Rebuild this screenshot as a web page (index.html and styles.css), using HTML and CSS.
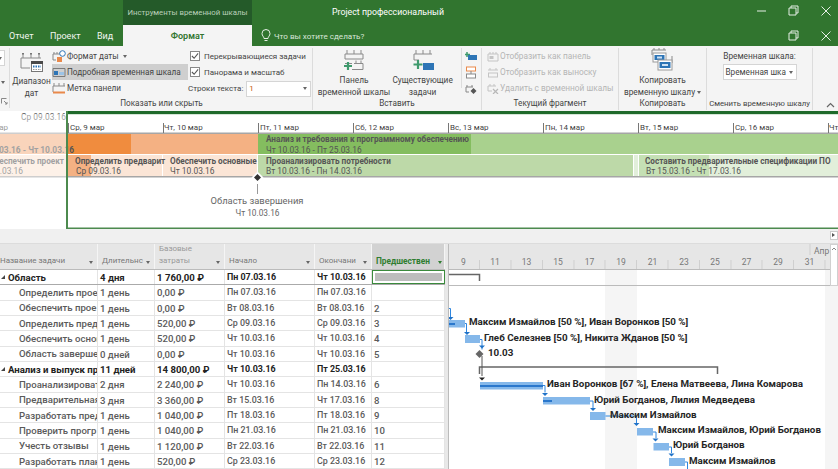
FILE: index.html
```html
<!DOCTYPE html>
<html lang="ru">
<head>
<meta charset="utf-8">
<title>Project профессиональный</title>
<link rel="stylesheet" href="styles.css">
</head>
<body>
<div class="app">
  <header class="titlebar">
    <div class="title-pad"></div>
    <div class="context-title">Инструменты временной шкалы</div>
    <div class="doc-title">Project профессиональный</div>
    <div class="winctl">
      <svg width="12" height="12" viewBox="0 0 12 12"><path class="wl" d="M1 6h9"/></svg>
      <svg width="12" height="12" viewBox="0 0 12 12"><path class="wl" d="M3 3V1h7v7H8M1 3h7v7H1z"/></svg>
      <svg width="12" height="12" viewBox="0 0 12 12"><path class="wl" d="M1.500 1.500l9 9M10.500 1.500l-9 9"/></svg>
    </div>
  </header>
  <nav class="tabs">
    <div class="tabs-left">
      <span class="tab t1">Отчет</span>
      <span class="tab t2">Проект</span>
      <span class="tab t3">Вид</span>
    </div>
    <span class="tab-active">Формат</span>
    <svg class="bulb" width="10" height="13" viewBox="0 0 10 13"><path class="wl" d="M3 9.500C3 7.500 1 7 1 4.500a4 4 0 0 1 8 0C9 7 7 7.500 7 9.500zM3.500 11.500h3"/></svg>
    <span class="tell">Что вы хотите сделать?</span>
    <div class="winctl2">
      <svg width="12" height="12" viewBox="0 0 12 12"><path class="wl" d="M3 3V1h7v7H8M1 3h7v7H1z"/></svg>
      <svg width="12" height="12" viewBox="0 0 12 12"><path class="wl" d="M1.500 1.500l9 9M10.500 1.500l-9 9"/></svg>
    </div>
  </nav>

  <section class="ribbon">
    <div class="stub">
      <div class="stub-combo"><i class="caret"></i></div>
      <i class="caret stub-caret"></i>
      <svg class="launcher" width="7" height="7" viewBox="0 0 7 7"><path d="M.500.500h5M.500.500v5M3 3l3 3M6 4v2H4" fill="none" stroke="#888"/></svg>
    </div>

    <div class="group g-show">
      <div class="gbody show-body">
        <div class="bigbtn range">
          <svg width="24" height="22" viewBox="0 0 24 22"><path d="M1 7h20M3 3v4M11 3v4M19 3v4M1 7v10h9" fill="none" stroke="#8a8a8a"/><rect x="2" y="2" width="2" height="1.500" fill="#777"/><rect x="10" y="2" width="2" height="1.500" fill="#777"/><rect x="18" y="2" width="2" height="1.500" fill="#777"/><rect x="11.500" y="10.500" width="11" height="10" fill="#fff" stroke="#777"/><rect x="11" y="10" width="12" height="3" fill="#4a4a4a"/><path d="M13 15.500h8" stroke="#2e75b6" stroke-width="2" stroke-dasharray="1.500 1"/><path d="M13 18.500h8" stroke="#9a9a9a" stroke-dasharray="1.500 1"/></svg>
          <span>Диапазон<br>дат</span>
        </div>
        <div class="col-cmds">
          <div class="cmd"><svg width="14" height="13" viewBox="0 0 14 13"><path d="M1 4h8M2 2v2M5 2v2M8 2v2M1 4v6h3" fill="none" stroke="#888"/><rect x="5" y="7" width="5" height="5" fill="#e9894a"/><circle cx="10.500" cy="3.500" r="2.800" fill="#fff" stroke="#2e75b6"/></svg><span>Формат даты</span><i class="caret"></i></div>
          <div class="cmd cmd-on"><svg width="14" height="12" viewBox="0 0 14 12"><path d="M1 2.500h12M1 2.500v8h12v-8" fill="none" stroke="#7a7a7a"/><rect x="2" y="5" width="4" height="4" fill="#2e75b6"/><rect x="7" y="6" width="5" height="3" fill="#9cc3e6"/></svg><span>Подробная временная шкала</span></div>
          <div class="cmd"><svg width="14" height="12" viewBox="0 0 14 12"><path d="M2 1v3M7 1v3M12 1v3M1 4h12M1 4v6" fill="none" stroke="#8a8a8a"/><path d="M1 10.500h12" stroke="#e9894a" stroke-width="2"/></svg><span>Метка панели</span></div>
        </div>
        <div class="col-checks">
          <label class="chk"><i class="box"><svg width="9" height="9" viewBox="0 0 9 9"><path d="M1 4.500l2.500 2.500L8 1.500" fill="none" stroke="#555" stroke-width="1.200"/></svg></i><span>Перекрывающиеся задачи</span></label>
          <label class="chk"><i class="box"><svg width="9" height="9" viewBox="0 0 9 9"><path d="M1 4.500l2.500 2.500L8 1.500" fill="none" stroke="#555" stroke-width="1.200"/></svg></i><span>Панорама и масштаб</span></label>
          <div class="lines"><span>Строки текста:</span><div class="combo combo-lines"><span class="one">1</span><i class="caret"></i></div></div>
        </div>
      </div>
      <div class="glabel">Показать или скрыть</div>
    </div>

    <div class="group g-insert">
      <div class="gbody insert-body">
        <div class="bigbtn bar-btn">
          <svg width="24" height="24" viewBox="0 0 24 24"><path d="M3 6h18M5 2v4M12 2v4M19 2v4M3 6v5h18V6" fill="none" stroke="#8a8a8a"/><path d="M3 15.500h7M12 15.500h9M14 12.500v3M19 12.500v3M21 15.500v6h-11" fill="none" stroke="#8a8a8a"/><path d="M6 14v8M2 18h8" stroke="#3f9a6d" stroke-width="2.200"/></svg>
          <span>Панель<br>временной шкалы</span>
        </div>
        <div class="bigbtn exist-btn">
          <svg width="24" height="24" viewBox="0 0 24 24"><path d="M3 6h18M5 2v4M12 2v4M19 2v4M3 6v6h5" fill="none" stroke="#8a8a8a"/><path d="M7 12v9M2.500 16.500h9" stroke="#3f9a6d" stroke-width="2.200"/><rect x="12" y="15" width="11" height="7" fill="#2e75b6"/></svg>
          <span>Существующие<br>задачи</span>
        </div>
        <div class="mini-icons">
          <svg width="12" height="9" viewBox="0 0 12 9"><path d="M2 0v5M0 2.500h5" stroke="#3f9a6d" stroke-width="1.500"/><rect x="3" y="3" width="9" height="5" fill="#2e75b6"/></svg>
          <svg width="12" height="13" viewBox="0 0 12 13"><rect x="1.500" y="1" width="9" height="4" fill="#fff" stroke="#e9894a"/><path d="M6 5v3" stroke="#888"/><rect x="1.500" y="8" width="9" height="4" fill="#fff" stroke="#8a8a8a"/></svg>
          <svg width="12" height="11" viewBox="0 0 12 11"><path d="M1 3h7M2 1v2M7 1v2M1 3v5h3" fill="none" stroke="#888"/><path d="M8.500 4l3 3-3 3-3-3z" fill="#555"/></svg>
        </div>
      </div>
      <div class="glabel">Вставить</div>
    </div>

    <div class="group g-current">
      <div class="gbody col-disabled">
        <div class="dis"><svg width="12" height="11" viewBox="0 0 12 11"><path d="M1 3h10M3 1v2M6 1v2M9 1v2M1 3v7h10V3" fill="none" stroke="#c4c4c4"/><rect x="2.500" y="5" width="4" height="3" fill="#c4c4c4"/></svg><span>Отобразить как панель</span></div>
        <div class="dis"><svg width="12" height="11" viewBox="0 0 12 11"><path d="M3 1v2M9 1v2M1 3h10" fill="none" stroke="#c4c4c4"/><rect x="1.500" y="6" width="9" height="4" fill="none" stroke="#c4c4c4"/></svg><span>Отобразить как выноску</span></div>
        <div class="dis"><svg width="12" height="11" viewBox="0 0 12 11"><path d="M1 3h8M3 1v2M7 1v2M1 3v5h4" fill="none" stroke="#c4c4c4"/><path d="M6 6l5 5M11 6l-5 5" stroke="#b8b8b8" stroke-width="1.200"/></svg><span>Удалить с временной шкалы</span></div>
      </div>
      <div class="glabel">Текущий фрагмент</div>
    </div>

    <div class="group g-copy">
      <div class="gbody">
        <div class="bigbtn copy-btn">
          <svg width="24" height="24" viewBox="0 0 24 24"><path d="M1 2h14M3 0v2M8 0v2M13 0v2M1 2v5M21 8v7" fill="none" stroke="#8a8a8a"/><rect x="2" y="5" width="13" height="9" fill="#fff" stroke="#999"/><rect x="3.500" y="7" width="10" height="5" fill="#2e75b6"/><rect x="6" y="8.500" width="5" height="2" fill="#cfe2f3"/><rect x="7" y="12" width="14" height="10" fill="#fff" stroke="#999"/><rect x="8.500" y="14" width="11" height="6" fill="#2e75b6"/><rect x="11" y="16" width="6" height="2" fill="#cfe2f3"/></svg>
          <span>Копировать<br>временную шкалу<i class="caret caret-in"></i></span>
        </div>
      </div>
      <div class="glabel">Копировать</div>
    </div>

    <div class="group g-switch">
      <div class="gbody switch-body">
        <div class="sw-title">Временная шкала:</div>
        <div class="combo combo-switch"><span>Временная шка</span><i class="caret"></i></div>
      </div>
      <div class="glabel glabel-sm">Сменить временную шкалу</div>
    </div>

    <svg class="collapse" width="9" height="6" viewBox="0 0 9 6"><path d="M1 5l3.500-3.500L8 5" fill="none" stroke="#666" stroke-width="1.200"/></svg>
  </section>

  <section class="timeline">
    <svg class="tl-svg" width="838" height="118" viewBox="0 110 838 118">
      <rect class="o-mid" x="0" y="133" width="258" height="20"/>
      <rect class="o-dark" x="68" y="133" width="63" height="20"/>
      <rect class="g-dark" x="258" y="133" width="213" height="20"/>
      <rect class="g-mid" x="471" y="133" width="367" height="20"/>
      <rect class="o-pale" x="0" y="154" width="66" height="21"/>
      <rect class="o-pale" x="68" y="154" width="94" height="21"/>
      <rect class="o-mid" x="68" y="154" width="23" height="21"/>
      <rect class="o-pale" x="163" y="154" width="94" height="21"/>
      <rect class="g-soft" x="258" y="154" width="375" height="21"/>
      <rect class="g-pale" x="634" y="154" width="4" height="21"/>
      <rect class="g-soft2" x="639" y="154" width="70" height="21"/>
      <rect class="g-pale" x="709" y="154" width="129" height="21"/>
      <rect class="rule" x="0" y="175" width="838" height="1.500"/>
      <rect class="rule" x="0" y="131.500" width="838" height="1.500"/>

      <g class="ticks">
        <path d="M68.500 122v10M163.500 122v10M258.500 122v10M353.500 122v10M448.500 122v10M543.500 122v10M638.500 122v10M733.500 122v10M828.500 122v10"/>
      </g>
      <text class="scale" x="70" y="129">Ср, 9 мар</text>
      <text class="scale" x="164" y="129">Чт, 10 мар</text>
      <text class="scale" x="260" y="129">Пт, 11 мар</text>
      <text class="scale" x="355" y="129">Сб, 12 мар</text>
      <text class="scale" x="450" y="129">Вс, 13 мар</text>
      <text class="scale" x="545" y="129">Пн, 14 мар</text>
      <text class="scale" x="640" y="129">Вт, 15 мар</text>
      <text class="scale" x="735" y="129">Ср, 16 мар</text>
      <text class="scale" x="829" y="129">Чт, 17 мар</text>
      <text class="scale" x="8" y="129" text-anchor="end">Вт, 8 мар</text>
      <text class="date-l" x="66" y="119" text-anchor="end">Ср 09.03.16</text>

      <text class="bar-t" x="266" y="141">Анализ и требования к программному обеспечению</text>
      <text class="bar-d" x="266" y="152">Чт 10.03.16 - Пт 25.03.16</text>
      <text class="bar-d bar-db" x="74" y="152" text-anchor="end">Пн 07.03.16 - Чт 10.03.16</text>
      <text class="bar-t" x="64" y="163" text-anchor="end">Обеспечить проект</text>
      <text class="bar-d" x="23" y="173" text-anchor="end">Вт 08.03.16</text>
      <text class="bar-t" x="75" y="163">Определить предварит</text>
      <text class="bar-d" x="76" y="173">Ср 09.03.16</text>
      <text class="bar-t" x="170" y="163">Обеспечить основные</text>
      <text class="bar-d" x="170" y="173">Чт 10.03.16</text>
      <text class="bar-t" x="266" y="163">Проанализировать потребности</text>
      <text class="bar-d" x="266" y="173">Вт 10.03.16 - Пн 14.03.16</text>
      <text class="bar-t" x="645" y="163">Составить предварительные спецификации ПО</text>
      <text class="bar-d" x="646" y="173">Вт 15.03.16 - Чт 17.03.16</text>

      <rect class="fade" x="0" y="113" width="66" height="115"/>

      <path class="ms-halo" d="M257.500 170.500l6 6-6 6-6-6z"/>
      <path class="ms" d="M257.500 173l3.500 3.500-3.500 3.500-3.500-3.500z"/>
      <path class="ms-line" d="M257.500 183v10"/>
      <text class="ms-t" x="257" y="202.500" text-anchor="middle">Область завершения</text>
      <text class="ms-d" x="257.500" y="215" text-anchor="middle">Чт 10.03.16</text>

      <rect class="frame-top" x="66" y="110" width="772" height="3"/>
      <rect class="frame-pale" x="68" y="113" width="770" height="1"/>
      <rect class="frame" x="66" y="110" width="2" height="118"/>
      <rect class="frame" x="66" y="226.500" width="772" height="1.500"/>
    </svg>
  </section>

  <div class="band"><i class="band-btn"></i></div>

  <section class="lower">
    <div class="sheet">
      <div class="row head">
        <div class="hc hc-name"><span>Название задачи</span><i class="caret"></i></div>
        <div class="hc"><span>Длительнс</span><i class="caret"></i></div>
        <div class="hc hc-two"><span>Базовые<br>затраты</span><i class="caret"></i></div>
        <div class="hc"><span>Начало</span><i class="caret"></i></div>
        <div class="hc"><span>Окончани</span><i class="caret"></i></div>
        <div class="hc hc-pred"><span>Предшествен</span><i class="caret caret-g"></i></div>
      </div>
      <div class="row sum first"><div class="c name"><i class="tri"></i>Область</div><div class="c">4 дня</div><div class="c">1 760,00 ₽</div><div class="c">Пн 07.03.16</div><div class="c">Чт 10.03.16</div><div class="c sel"><i></i></div></div>
      <div class="row"><div class="c name sub">Определить прое</div><div class="c">1 день</div><div class="c">0,00 ₽</div><div class="c">Пн 07.03.16</div><div class="c">Пн 07.03.16</div><div class="c"></div></div>
      <div class="row"><div class="c name sub">Обеспечить прое</div><div class="c">1 день</div><div class="c">0,00 ₽</div><div class="c">Вт 08.03.16</div><div class="c">Вт 08.03.16</div><div class="c">2</div></div>
      <div class="row"><div class="c name sub">Определить пред</div><div class="c">1 день</div><div class="c">520,00 ₽</div><div class="c">Ср 09.03.16</div><div class="c">Ср 09.03.16</div><div class="c">3</div></div>
      <div class="row"><div class="c name sub">Обеспечить основ</div><div class="c">1 день</div><div class="c">520,00 ₽</div><div class="c">Чт 10.03.16</div><div class="c">Чт 10.03.16</div><div class="c">4</div></div>
      <div class="row"><div class="c name sub">Область заверше</div><div class="c">0 дней</div><div class="c">0,00 ₽</div><div class="c">Чт 10.03.16</div><div class="c">Чт 10.03.16</div><div class="c">5</div></div>
      <div class="row sum"><div class="c name"><i class="tri"></i>Анализ и выпуск пр</div><div class="c">11 дней</div><div class="c">14 800,00 ₽</div><div class="c">Чт 10.03.16</div><div class="c">Пт 25.03.16</div><div class="c"></div></div>
      <div class="row"><div class="c name sub">Проанализироват</div><div class="c">2 дня</div><div class="c">2 240,00 ₽</div><div class="c">Чт 10.03.16</div><div class="c">Пн 14.03.16</div><div class="c">6</div></div>
      <div class="row"><div class="c name sub">Предварительная</div><div class="c">3 дня</div><div class="c">3 360,00 ₽</div><div class="c">Вт 15.03.16</div><div class="c">Чт 17.03.16</div><div class="c">8</div></div>
      <div class="row"><div class="c name sub">Разработать пред</div><div class="c">1 день</div><div class="c">1 040,00 ₽</div><div class="c">Пт 18.03.16</div><div class="c">Пт 18.03.16</div><div class="c">9</div></div>
      <div class="row"><div class="c name sub">Проверить прогр</div><div class="c">1 день</div><div class="c">1 040,00 ₽</div><div class="c">Пн 21.03.16</div><div class="c">Пн 21.03.16</div><div class="c">10</div></div>
      <div class="row"><div class="c name sub">Учесть отзывы</div><div class="c">1 день</div><div class="c">1 120,00 ₽</div><div class="c">Вт 22.03.16</div><div class="c">Вт 22.03.16</div><div class="c">11</div></div>
      <div class="row"><div class="c name sub">Разработать план</div><div class="c">1 день</div><div class="c">520,00 ₽</div><div class="c">Ср 23.03.16</div><div class="c">Ср 23.03.16</div><div class="c">12</div></div>
    </div>
    <div class="split"></div>
    <div class="gantt">
      <svg class="g-svg" width="389" height="226" viewBox="449 243 389 226">
        <rect class="g-head" x="449" y="243" width="389" height="26"/>
        <path class="g-tick" d="M479.500 259v10M511 259v10M542.500 259v10M574 259v10M605 259v10M636.500 259v10M668 259v10M699.500 259v10M731 259v10M762 259v10M793.500 259v10M825 259v10M810 243v11"/>
        <rect class="g-rule" x="449" y="268" width="389" height="1"/>
        <rect class="weekend" x="605" y="285" width="32" height="184"/>
        <rect class="weekend" x="605" y="269" width="32" height="15"/>
        <rect class="weekend" x="825" y="269" width="13" height="200"/>
        <rect class="g-rule" x="449" y="284" width="389" height="1"/>
        <text class="apr" x="814" y="253">Апр</text>
        <text class="day" x="463.500" y="264" text-anchor="middle">9</text>
        <text class="day" x="495" y="264" text-anchor="middle">11</text>
        <text class="day" x="526.500" y="264" text-anchor="middle">13</text>
        <text class="day" x="558" y="264" text-anchor="middle">15</text>
        <text class="day" x="589.500" y="264" text-anchor="middle">17</text>
        <text class="day" x="621" y="264" text-anchor="middle">19</text>
        <text class="day" x="652.500" y="264" text-anchor="middle">21</text>
        <text class="day" x="684" y="264" text-anchor="middle">23</text>
        <text class="day" x="715" y="264" text-anchor="middle">25</text>
        <text class="day" x="746.500" y="264" text-anchor="middle">27</text>
        <text class="day" x="778" y="264" text-anchor="middle">29</text>
        <text class="day" x="809.500" y="264" text-anchor="middle">31</text>

        <path class="summary" d="M449 273.500h30.500v6.500"/>
        <path class="summary" d="M479.500 373v-7h238v7"/>

        <path class="link" d="M449 307.500h1.500v9"/>
        <path class="arrow" d="M447.500 316h6l-3 3z"/>
        <path class="link" d="M465 322.500h1.500v9"/>
        <path class="arrow" d="M464 331h6l-3 3z"/>
        <path class="link" d="M480 338.500h2v10"/>
        <path class="arrow" d="M479 344.500h6l-3 3z" />

        <rect class="bar" x="449" y="319" width="16" height="7.500"/>
        <rect class="bar-in" x="449" y="322" width="6" height="2"/>
        <rect class="bar" x="465" y="334" width="15" height="8"/>
        <path class="ms-g" d="M479.500 349l4 4-4 4-4-4z"/>
        <path class="link-k" d="M482 355v20"/>
        <path class="arrow-k" d="M479 376.500h6l-3 3z"/>

        <rect class="bar" x="480" y="381" width="63" height="7.500"/>
        <rect class="bar-in" x="480" y="384" width="63" height="2"/>
        <path class="link" d="M543 384.500h2v7"/>
        <path class="arrow" d="M542 392h6l-3 3z"/>
        <rect class="bar" x="543" y="396" width="47" height="7.500"/>
        <rect class="bar-in" x="543" y="399" width="9" height="2"/>
        <path class="link" d="M590 400h3v7"/>
        <path class="arrow" d="M590 407h6l-3 3z"/>
        <rect class="bar" x="590" y="411" width="15.500" height="8"/>
        <path class="link" d="M605.500 415h31v7"/>
        <path class="arrow" d="M633.500 422h6l-3 3z"/>
        <rect class="bar" x="637" y="427" width="16" height="7.500"/>
        <path class="link" d="M653 431h3v6"/>
        <path class="arrow" d="M652.500 437.500h6l-3 3z"/>
        <rect class="bar" x="653.500" y="442" width="15.500" height="7.500"/>
        <path class="link" d="M669 446h2.500v6"/>
        <path class="arrow" d="M668.500 452.500h6l-3 3z"/>
        <rect class="bar" x="669" y="457" width="16" height="8"/>
        <path class="link" d="M685 461h2.500v8"/>

        <text class="res" x="469" y="323.500">Максим Измайлов [50 %], Иван Воронков [50 %]</text>
        <text class="res" x="484" y="340">Глеб Селезнев [50 %], Никита Жданов [50 %]</text>
        <text class="res" x="488" y="355">10.03</text>
        <text class="res" x="547" y="386">Иван Воронков [67 %], Елена Матвеева, Лина Комарова</text>
        <text class="res" x="594" y="401.500">Юрий Богданов, Лилия Медведева</text>
        <text class="res" x="610" y="416.500">Максим Измайлов</text>
        <text class="res" x="658" y="432">Максим Измайлов, Юрий Богданов</text>
        <text class="res" x="673" y="447">Юрий Богданов</text>
        <text class="res" x="689" y="462.500">Максим Измайлов</text>

        <rect class="vs" x="830.500" y="243.500" width="7" height="41"/>
        <path class="vs-ar" d="M832 249l2-2 2 2"/>
      </svg>
    </div>
  </section>
</div>
</body>
</html>
```
FILE: styles.css
```css
* { box-sizing: border-box; }
html, body { margin: 0; padding: 0; }
body { width: 838px; height: 469px; overflow: hidden; background: #fff; font-family: Roboto, "Open Sans", sans-serif; font-size: 9px; color: #444; }
.app { display: flex; flex-direction: column; width: 838px; height: 469px; overflow: hidden; }
i { font-style: normal; }
svg { flex: none; }
.wl { fill: none; stroke: #e6efe6; stroke-width: 1; }

.titlebar { flex: 0 0 24px; display: flex; background: #31752f; color: #fff; }
.title-pad { width: 123px; }
.context-title { width: 129px; background: #245a29; color: #b9cfb9; font-size: 7.800px; white-space: nowrap; display: flex; align-items: center; justify-content: center; }
.doc-title { margin-left: 80px; font-size: 8.800px; line-height: 25px; white-space: nowrap; }
.winctl { margin-left: auto; display: flex; gap: 20px; padding: 5px 6px 0 0; }

.tabs { flex: 0 0 21px; display: flex; align-items: center; background: #31752f; color: #f1f6f1; font-size: 9px; }
.tabs-left { width: 123px; display: flex; padding-left: 9px; }
.tab { white-space: nowrap; }
.t1 { width: 41px; }
.t2 { width: 47px; }
.tab-active { width: 129px; height: 21px; background: #f4f4f4; color: #31752f; font-weight: 600; display: flex; align-items: center; justify-content: center; }
.bulb { margin-left: 9px; }
.tell { margin-left: 3px; color: #d8e6d8; font-size: 8.100px; white-space: nowrap; }
.winctl2 { margin-left: auto; display: flex; gap: 20px; padding-right: 6px; }

.ribbon { flex: 0 0 65px; position: relative; display: flex; background: #f4f4f4; padding-top: 2px; }
.caret { display: inline-block; width: 0; height: 0; border: 2.500px solid transparent; border-top: 3px solid #666; border-bottom-width: 0; }
.stub { width: 10px; border-right: 1px solid #dcdcdc; height: 60px; display: flex; flex-direction: column; align-items: flex-end; position: relative; margin-right: 1px; }
.stub-combo { width: 6px; height: 16px; margin: 2px 4px 0 0; background: #fff; border: 1px solid #d5d5d5; border-left: 0; display: flex; align-items: center; }
.stub-combo .caret { margin-left: -1px; }
.stub-caret { margin: 15px 4px 0 0; }
.launcher { margin: 14px 1px 0 0; }

.group { display: flex; flex-direction: column; height: 62px; border-right: 1px solid #dcdcdc; }
.gbody { flex: 1; display: flex; min-height: 0; }
.glabel { flex: 0 0 13px; text-align: center; font-size: 8.200px; line-height: 13px; color: #444; white-space: nowrap; }
.glabel-sm { font-size: 7.800px; }
.g-show { width: 302px; }
.g-insert { width: 169px; }
.g-current { width: 137px; }
.g-copy { width: 88px; }
.g-switch { width: 106px; }

.bigbtn { display: flex; flex-direction: column; align-items: center; text-align: center; font-size: 8.300px; line-height: 11.500px; white-space: nowrap; color: #444; }
.bigbtn svg { height: 24px; margin-bottom: 3px; }
.range { width: 41px; }
.range svg { margin-top: 2px; margin-bottom: 2px; }
.col-cmds { width: 136px; display: flex; flex-direction: column; }
.cmd { height: 16px; display: flex; align-items: center; gap: 1px; font-size: 8.200px; white-space: nowrap; }
.cmd .caret { margin-left: 3px; }
.cmd-on { background: #cfcfcf; }
.col-checks { flex: 1; padding-left: 2px; display: flex; flex-direction: column; }
.chk { height: 16px; display: flex; align-items: center; gap: 4px; font-size: 8.000px; white-space: nowrap; }
.box { width: 10px; height: 10px; background: #fff; border: 1px solid #888; display: flex; align-items: center; justify-content: center; }
.box svg { width: 8px; height: 8px; }
.lines { height: 17px; margin-left: -2px; display: flex; align-items: center; gap: 3px; font-size: 8.000px; white-space: nowrap; }
.combo { background: #fff; border: 1px solid #d5d5d5; display: flex; align-items: center; justify-content: space-between; padding: 0 3px 0 2px; }
.combo-lines { width: 65px; height: 16px; }
.one { color: #c55a11; }

.insert-body { padding-left: 5px; }
.bar-btn { width: 72px; }
.exist-btn { width: 66px; }
.mini-icons { width: 20px; margin-left: 6px; padding-left: 3px; display: flex; flex-direction: column; gap: 5px; padding-top: 4px; height: 40px; border-left: 1px solid #dcdcdc; }
.col-disabled { flex-direction: column; padding-left: 5px; color: #b5b5b5; }
.dis { height: 16px; display: flex; align-items: center; gap: 1px; font-size: 8.300px; white-space: nowrap; }
.copy-btn { width: 88px; }
.caret-in { margin-left: 2px; vertical-align: middle; }
.switch-body { flex-direction: column; align-items: center; }
.sw-title { height: 16px; line-height: 16px; font-size: 8.300px; white-space: nowrap; }
.combo-switch { width: 74px; height: 16px; font-size: 8.200px; white-space: nowrap; overflow: hidden; }
.collapse { position: absolute; right: 3px; bottom: 3px; }

.timeline { flex: 0 0 118px; background: #fff; }
.tl-svg { display: block; }
.tl-svg text { font-family: Roboto, "Open Sans", sans-serif; }
.o-dark { fill: #f08c3e; }
.o-mid { fill: #f4b183; }
.o-pale { fill: #fbe5d6; }
.g-dark { fill: #84bd5f; }
.g-mid { fill: #a9d18e; }
.g-soft { fill: #bdd9a8; }
.g-soft2 { fill: #c5e0b4; }
.g-pale { fill: #e2efda; }
.rule { fill: #a6a6a6; }
.ticks path { stroke: #777; fill: none; }
.scale { font-size: 8px; fill: #444; }
.date-l { font-size: 8.400px; fill: #555; }
.bar-t { font-size: 8.200px; font-weight: 700; fill: #555; }
.bar-d { font-size: 8.400px; fill: #555; }
.bar-db { font-weight: 700; }
.fade { fill: #fff; fill-opacity: .45; }
.ms-halo { fill: #fff; }
.ms { fill: #333; }
.ms-line { stroke: #999; fill: none; }
.ms-t { font-size: 9.400px; fill: #666; }
.ms-d { font-size: 8.300px; fill: #666; }
.frame-top { fill: #1f6a2b; }
.frame-pale { fill: #d6e6d8; }
.frame { fill: #4c8a4e; }

.band { flex: 0 0 15px; background: #f0f0f0; border-bottom: 1px solid #dcdcdc; position: relative; }
.band-btn { position: absolute; right: 0; top: 2px; width: 8px; height: 9px; background: #fff; border: 1px solid #ccc; }
.band-btn::after { content: ""; position: absolute; left: 1px; top: 1px; border: 2.500px solid transparent; border-left: 3px solid #555; border-right-width: 0; }

.lower { flex: 1; display: flex; min-height: 0; }
.sheet { width: 445px; display: flex; flex-direction: column; }
.split { width: 4px; background: #e8e8e8; border-right: 1px solid #bbb; }
.gantt { flex: 1; overflow: hidden; }
.g-svg { display: block; }
.row { flex: 0 0 15.330px; height: 15.330px; min-height: 0; display: grid; grid-template-columns: 98px 57px 70px 90px 57px 73px; font-size: 9.600px; font-weight: 500; color: #5a5a5a; border-bottom: 1px solid #e4e4e4; }
.row .c:nth-child(4), .row .c:nth-child(5) { font-size: 8.900px; }
.head { flex: 0 0 26px; height: 26px; background: #e6e6e6; border-bottom: 1px solid #bbb; font-weight: 400; font-size: 8px; color: #777; }
.hc { display: flex; align-items: flex-end; justify-content: space-between; padding: 0 4px 2px 4px; border-right: 1px solid #f5f5f5; white-space: nowrap; line-height: 12px; overflow: hidden; }
.hc .caret { margin-bottom: 3px; }
.hc-name { padding-left: 0; }
.hc-two { color: #999; }
.hc-pred { background: #d2d2d2; color: #2f7d31; font-weight: 700; font-size: 8.300px; padding-right: 2px; }
.caret-g { border-top-color: #2f7d31; }
.c { padding-left: 2px; border-right: 1px solid #e4e4e4; white-space: nowrap; overflow: hidden; line-height: 15px; }
.sum { font-weight: 700; color: #222; }
.first { border-bottom: 1px solid #aaa; }
.name { display: flex; align-items: center; padding-left: 0; }
.sub { padding-left: 19px; }
.tri { width: 0; height: 0; border-style: solid; border-width: 0 0 4px 4px; border-color: transparent transparent #444 transparent; margin: 0 3px 0 1px; flex: none; }
.sel { border: 1px solid #3a8a3c; padding: 2px; }
.sel i { display: block; height: 100%; background: #bdbdbd; }

.g-head { fill: #e6e6e6; }
.g-tick { stroke: #cfcfcf; fill: none; }
.g-rule { fill: #bbb; }
.weekend { fill: #f5f5f5; }
.apr, .day { font-family: Roboto, sans-serif; font-size: 8.500px; fill: #777; }
.summary { fill: none; stroke: #666; stroke-width: 1.500; }
.link { fill: none; stroke: #2f86df; }
.arrow { fill: #1f72c8; }
.link-k { stroke: #555; fill: none; stroke-width: 1; }
.arrow-k { fill: #222; }
.bar { fill: #85b8ea; }
.bar-in { fill: #2a77cc; }
.ms-g { fill: #666; }
.res { font-family: Roboto, sans-serif; font-size: 9.800px; font-weight: 700; fill: #262626; }
.vs { fill: #fff; stroke: #d0d0d0; }
.vs-ar { fill: none; stroke: #888; }
```
